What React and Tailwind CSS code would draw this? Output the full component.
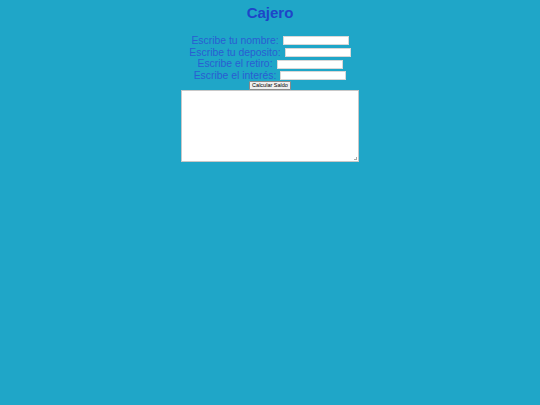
export default function App() {
  const rows = ['Escribe tu nombre:', 'Escribe tu deposito:', 'Escribe el retiro:', 'Escribe el interés:']
  return (
    <div className="min-h-[405px] w-full bg-[#1fa6c8] font-['Liberation_Sans',Arial,sans-serif]">
      <div className="flex flex-col items-center pt-[4px]">
        <h1 className="text-[15px] leading-[17px] font-bold text-[#1e45c8]">Cajero</h1>
        <div className="mt-[14px] flex flex-col items-center">
          {rows.map((r) => (
            <div key={r} className="flex items-center justify-center h-[11.7px]">
              <span className="text-[10.4px] leading-[11.7px] text-[#2a5dd2]">{r}</span>
              <span className="ml-[4px] inline-block w-[66px] h-[9px] bg-white border border-[#d8d8d8]"></span>
            </div>
          ))}
        </div>
        <button className="mt-[-1px] h-[9px] px-[2px] flex items-center bg-[#efefef] border border-[#8a8a8a] rounded-[1px] text-[5.5px] leading-[6px] text-black">
          Calcular Saldo
        </button>
        <div className="relative w-[178px] h-[72px] bg-white border border-[#c8c8c8]">
          <div className="absolute right-[1px] bottom-[1px] w-[3px] h-[3px] border-r border-b border-[#aaa]"></div>
        </div>
      </div>
    </div>
  )
}
